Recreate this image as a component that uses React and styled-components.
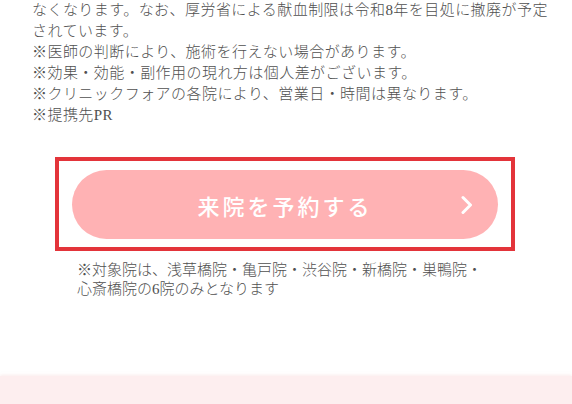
import React from 'react';
import styled, { createGlobalStyle } from 'styled-components';

const GlobalStyle = createGlobalStyle`
  html, body {
    margin: 0;
    padding: 0;
    background: #ffffff;
  }
  body {
    font-family: "Liberation Serif", "Noto Sans CJK JP", serif;
    color: #555555;
  }
`;

const Page = styled.div`
  width: 572px;
  height: 404px;
  display: flex;
  flex-direction: column;
  overflow: hidden;
`;

const Notes = styled.div`
  padding: 0 20px 0 32px;
  font-size: 15px;
  letter-spacing: 0.45px;
  line-height: 21px;
  font-weight: 300;
  color: #505050;
`;

const NoteLine = styled.p`
  margin: 0;
`;

const ReserveFrame = styled.div`
  box-sizing: border-box;
  width: 460px;
  margin: 31px auto 0 55px;
  border: 4px solid #e3343a;
  padding: 9px 13px 8px;
`;

const ReserveButton = styled.a`
  box-sizing: border-box;
  height: 69px;
  border-radius: 35px;
  background: #ffb2b4;
  color: #ffffff;
  display: flex;
  align-items: center;
  justify-content: center;
  position: relative;
  text-decoration: none;
  font-size: 22px;
  letter-spacing: 3px;
  font-weight: 500;
  cursor: pointer;
`;

const Chevron = styled.svg`
  position: absolute;
  right: 25px;
  top: 50%;
  transform: translateY(-50%);
`;

const Caption = styled.div`
  width: 416px;
  margin: 10px 0 0 77px;
  font-size: 15px;
  line-height: 19px;
  font-weight: 300;
  color: #505050;
`;

const FooterBand = styled.div`
  margin-top: 77px;
  height: 28px;
  flex-shrink: 0;
  background: #fdeeef;
  box-shadow: 0 -1px 3px rgba(240, 200, 200, 0.35);
`;

const lines = [
  'なくなります。なお、厚労省による献血制限は令和8年を目処に撤廃が予定',
  'されています。',
  '※医師の判断により、施術を行えない場合があります。',
  '※効果・効能・副作用の現れ方は個人差がございます。',
  '※クリニックフォアの各院により、営業日・時間は異なります。',
  '※提携先PR',
];

const App = () => {
  return (
    <>
      <GlobalStyle />
      <Page>
        <Notes>
          {lines.map(line => (
            <NoteLine key={line}>{line}</NoteLine>
          ))}
        </Notes>
        <ReserveFrame>
          <ReserveButton>
            来院を予約する
            <Chevron width="12" height="19" viewBox="0 0 12 19">
              <path
                d="M2 2 L9.5 9.5 L2 17"
                fill="none"
                stroke="#ffffff"
                strokeWidth="3"
                strokeLinecap="round"
                strokeLinejoin="round"
              />
            </Chevron>
          </ReserveButton>
        </ReserveFrame>
        <Caption>
          ※対象院は、浅草橋院・亀戸院・渋谷院・新橋院・巣鴨院・心斎橋院の6院のみとなります
        </Caption>
        <FooterBand />
      </Page>
    </>
  );
};

export default App;
